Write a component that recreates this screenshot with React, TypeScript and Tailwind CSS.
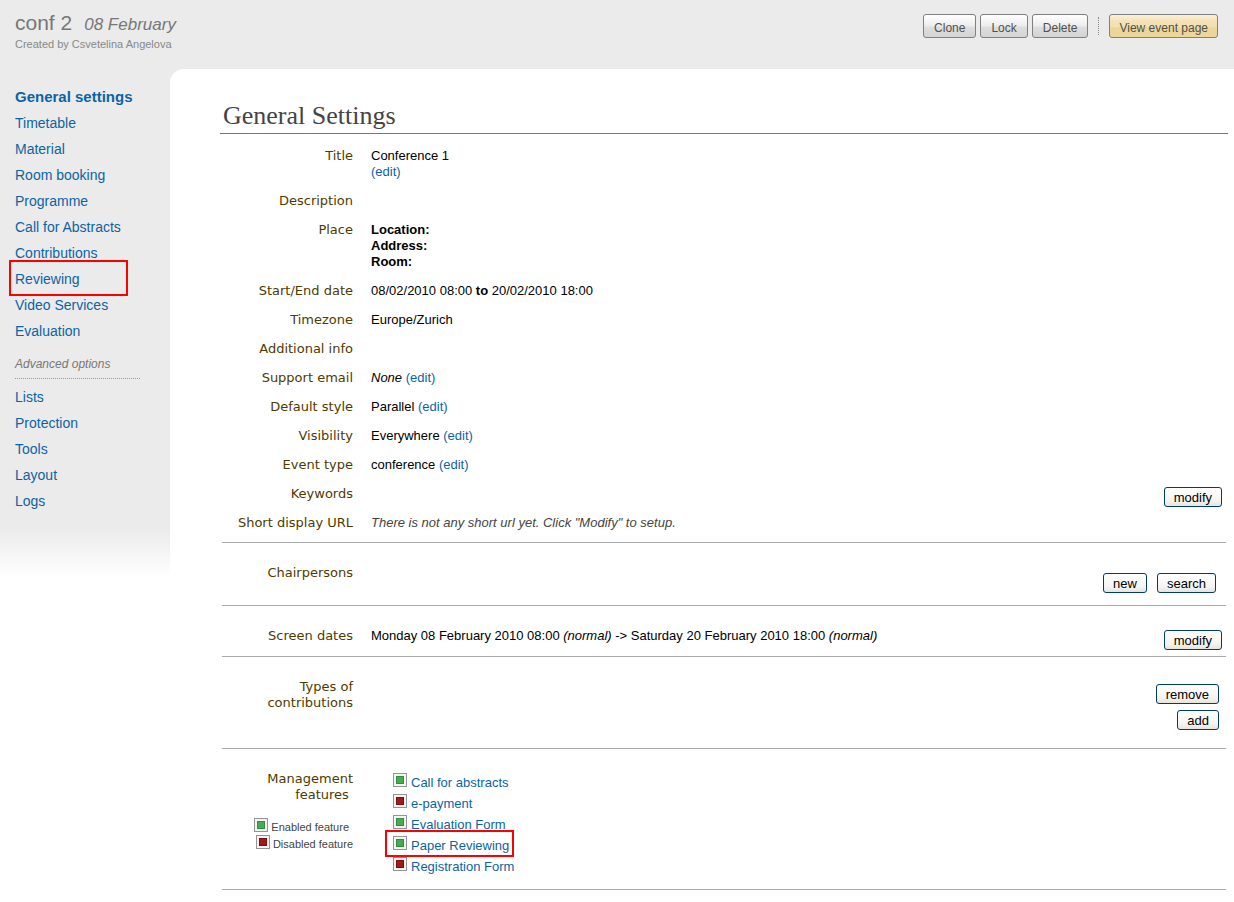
import type { ReactNode } from "react";

const link = "text-[#0b63a5] hover:underline";

const mainNav = [
  "General settings",
  "Timetable",
  "Material",
  "Room booking",
  "Programme",
  "Call for Abstracts",
  "Contributions",
  "Reviewing",
  "Video Services",
  "Evaluation",
];

const advancedNav = ["Lists", "Protection", "Tools", "Layout", "Logs"];

const features = [
  { name: "Call for abstracts", enabled: true },
  { name: "e-payment", enabled: false },
  { name: "Evaluation Form", enabled: true },
  { name: "Paper Reviewing", enabled: true, marked: true },
  { name: "Registration Form", enabled: false },
];

function NavItem({ name }: { name: string }) {
  const active = name === "General settings";
  return (
    <li className="relative h-[26px]">
      <a
        href="#"
        aria-current={active ? "page" : undefined}
        className={`${link} ${active ? "text-[15px] font-bold" : "text-sm"} leading-[26px]`}
      >
        {name}
      </a>
      {name === "Reviewing" && (
        <span className="pointer-events-none absolute -top-[6px] -left-[6px] h-9 w-[119px] border-2 border-[#f00]" />
      )}
    </li>
  );
}

function HeaderButton({ children, gold = false }: { children: ReactNode; gold?: boolean }) {
  return (
    <button
      type="button"
      className={`h-6 rounded-[3px] border border-[#808080] pt-[3px] text-xs text-[#505050] ${
        gold
          ? "bg-[linear-gradient(#fbf1d9_0%,#f4e2b5_30%,#f3e0b0_56%,#edd699_57%,#edd699_100%)] px-[9px]"
          : "bg-[linear-gradient(#ffffff_0%,#f4f4f4_30%,#ececec_50%,#dedede_55%,#d4d4d4_100%)] px-[10px]"
      }`}
    >
      {children}
    </button>
  );
}

function SmallButton({ children }: { children: ReactNode }) {
  return (
    <button
      type="button"
      className="h-5 rounded-[3px] border border-[#003c74] bg-[linear-gradient(#ffffff,#f5f4f0_70%,#e6e4da)] px-[9px] pt-px text-[13px] leading-[18px] text-black"
    >
      {children}
    </button>
  );
}

function StatusIcon({ enabled }: { enabled: boolean }) {
  return (
    <svg width="14" height="14" viewBox="0 0 14 14" className="shrink-0" aria-hidden="true" shapeRendering="crispEdges">
      <rect x="0.5" y="0.5" width="13" height="13" fill="#f4f4f4" stroke="#959595" />
      <rect
        x="3.5"
        y="3.5"
        width="7"
        height="7"
        fill={enabled ? "#47ac50" : "#a31919"}
        stroke={enabled ? "#2f8f3c" : "#7c0f0f"}
      />
    </svg>
  );
}

function Row({ label, children }: { label: ReactNode; children?: ReactNode }) {
  return (
    <div className="flex gap-[18px]">
      <dt className="w-[131px] shrink-0 text-right font-['DejaVu_Sans',sans-serif] text-[#4f3a00]">{label}</dt>
      <dd>{children}</dd>
    </div>
  );
}

function Section({ className, rows, actions }: { className: string; rows: ReactNode; actions?: ReactNode }) {
  return (
    <section className={`mx-[2px] flex justify-between border-b border-[#aaaaaa] ${className}`}>
      <dl className="flex flex-col gap-[13px]">{rows}</dl>
      {actions}
    </section>
  );
}

function Edit() {
  return (
    <a href="#" className={link}>
      (edit)
    </a>
  );
}

export default function App() {
  return (
    <div className="bg-white font-['Liberation_Sans',Arial,sans-serif] text-[13px] leading-4 text-black">
      <header className="flex h-[69px] items-start justify-between bg-[#ebebeb] pr-4 pl-[15px]">
        <div className="pt-[11px] text-[#777777]">
          <h1 className="flex items-baseline gap-3 text-[21px] leading-6">
            conf 2 <span className="text-[17px] italic">08 February</span>
          </h1>
          <p className="text-[11px] leading-[14px] text-[#888888]">Created by Csvetelina Angelova</p>
        </div>
        <div className="flex items-center gap-1 pt-[14px]">
          <HeaderButton>Clone</HeaderButton>
          <HeaderButton>Lock</HeaderButton>
          <HeaderButton>Delete</HeaderButton>
          <span className="mx-[6px] h-[18px] border-l border-dotted border-[#888888]" />
          <HeaderButton gold>View event page</HeaderButton>
        </div>
      </header>

      <div className="flex items-start">
        <aside className="w-[170px] shrink-0 bg-[linear-gradient(#ebebeb_calc(100%-50px),#ffffff)] pt-[15px] pr-[30px] pb-[64px] pl-[15px]">
          <nav aria-label="Event management">
            <ul>
              {mainNav.map((name) => (
                <NavItem key={name} name={name} />
              ))}
            </ul>
            <h2 className="mt-3 mb-[5px] border-b border-dotted border-[#999999] pb-[6px] text-xs leading-4 text-[#777777] italic">
              Advanced options
            </h2>
            <ul>
              {advancedNav.map((name) => (
                <NavItem key={name} name={name} />
              ))}
            </ul>
          </nav>
        </aside>

        <div className="min-w-0 grow bg-[linear-gradient(#ebebeb,#ebebeb)] bg-[length:16px_16px] bg-no-repeat">
          <main className="rounded-tl-[14px] bg-white pt-[33px] pr-[6px] pb-3 pl-[50px]">
            <h2 className="border-b border-[#777777] pb-[3px] pl-[3px] font-['Liberation_Serif',serif] text-[26px] leading-7 text-[#444444]">
              General Settings
            </h2>

            <Section
              className="pt-[14px] pb-[11px]"
              rows={
                <>
                  <Row label="Title">
                    Conference 1<br />
                    <Edit />
                  </Row>
                  <Row label="Description" />
                  <Row label="Place">
                    <b>
                      Location:
                      <br />
                      Address:
                      <br />
                      Room:
                    </b>
                  </Row>
                  <Row label="Start/End date">
                    08/02/2010 08:00 <b>to</b> 20/02/2010 18:00
                  </Row>
                  <Row label="Timezone">Europe/Zurich</Row>
                  <Row label="Additional info" />
                  <Row label="Support email">
                    <i>None</i> <Edit />
                  </Row>
                  <Row label="Default style">
                    Parallel <Edit />
                  </Row>
                  <Row label="Visibility">
                    Everywhere <Edit />
                  </Row>
                  <Row label="Event type">
                    conference <Edit />
                  </Row>
                  <Row label="Keywords" />
                  <Row label="Short display URL">
                    <i className="text-[#444444]">There is not any short url yet. Click "Modify" to setup.</i>
                  </Row>
                </>
              }
              actions={
                <div className="flex items-end pr-1 pb-6">
                  <SmallButton>modify</SmallButton>
                </div>
              }
            />

            <Section
              className="pt-[22px] pb-3"
              rows={<Row label="Chairpersons" />}
              actions={
                <div className="flex gap-[10px] pt-2 pr-[10px]">
                  <SmallButton>new</SmallButton>
                  <SmallButton>search</SmallButton>
                </div>
              }
            />

            <Section
              className="pt-[22px] pb-[6px]"
              rows={
                <Row label="Screen dates">
                  Monday 08 February 2010 08:00 <i>(normal)</i> -&gt; Saturday 20 February 2010 18:00 <i>(normal)</i>
                </Row>
              }
              actions={
                <div className="flex pt-[2px] pr-1">
                  <SmallButton>modify</SmallButton>
                </div>
              }
            />

            <Section
              className="pt-[22px] pb-[18px]"
              rows={
                <Row
                  label={
                    <>
                      Types of
                      <br />
                      contributions
                    </>
                  }
                />
              }
              actions={
                <div className="flex flex-col items-end gap-[6px] pt-[5px] pr-[7px]">
                  <SmallButton>remove</SmallButton>
                  <SmallButton>add</SmallButton>
                </div>
              }
            />

            <Section
              className="pt-[22px] pb-[11px]"
              rows={
                <Row
                  label={
                    <>
                      Management
                      <br />
                      features&nbsp;
                      <span className="flex flex-col pt-[15px] font-['Liberation_Sans',Arial,sans-serif] text-[11px] leading-[15px] text-[#444444]">
                        <span className="flex items-start justify-end gap-[3px] pr-1">
                          <StatusIcon enabled />
                          <span className="pt-[2px]">Enabled feature</span>
                        </span>
                        <span className="flex items-start justify-end gap-[3px]">
                          <StatusIcon enabled={false} />
                          <span className="pt-[2px]">Disabled feature</span>
                        </span>
                      </span>
                    </>
                  }
                >
                  <ul className="pt-[2px] pl-[22px]">
                    {features.map((f) => (
                      <li key={f.name} className="relative flex h-[21px] w-fit items-start gap-1">
                        <StatusIcon enabled={f.enabled} />
                        <a href="#" className={`${link} pt-[2px]`}>
                          {f.name}
                        </a>
                        {f.marked && (
                          <span className="pointer-events-none absolute -top-[6px] -left-2 h-[27px] w-[129px] border-2 border-[#f00]" />
                        )}
                      </li>
                    ))}
                  </ul>
                </Row>
              }
            />
          </main>
        </div>
      </div>
    </div>
  );
}
